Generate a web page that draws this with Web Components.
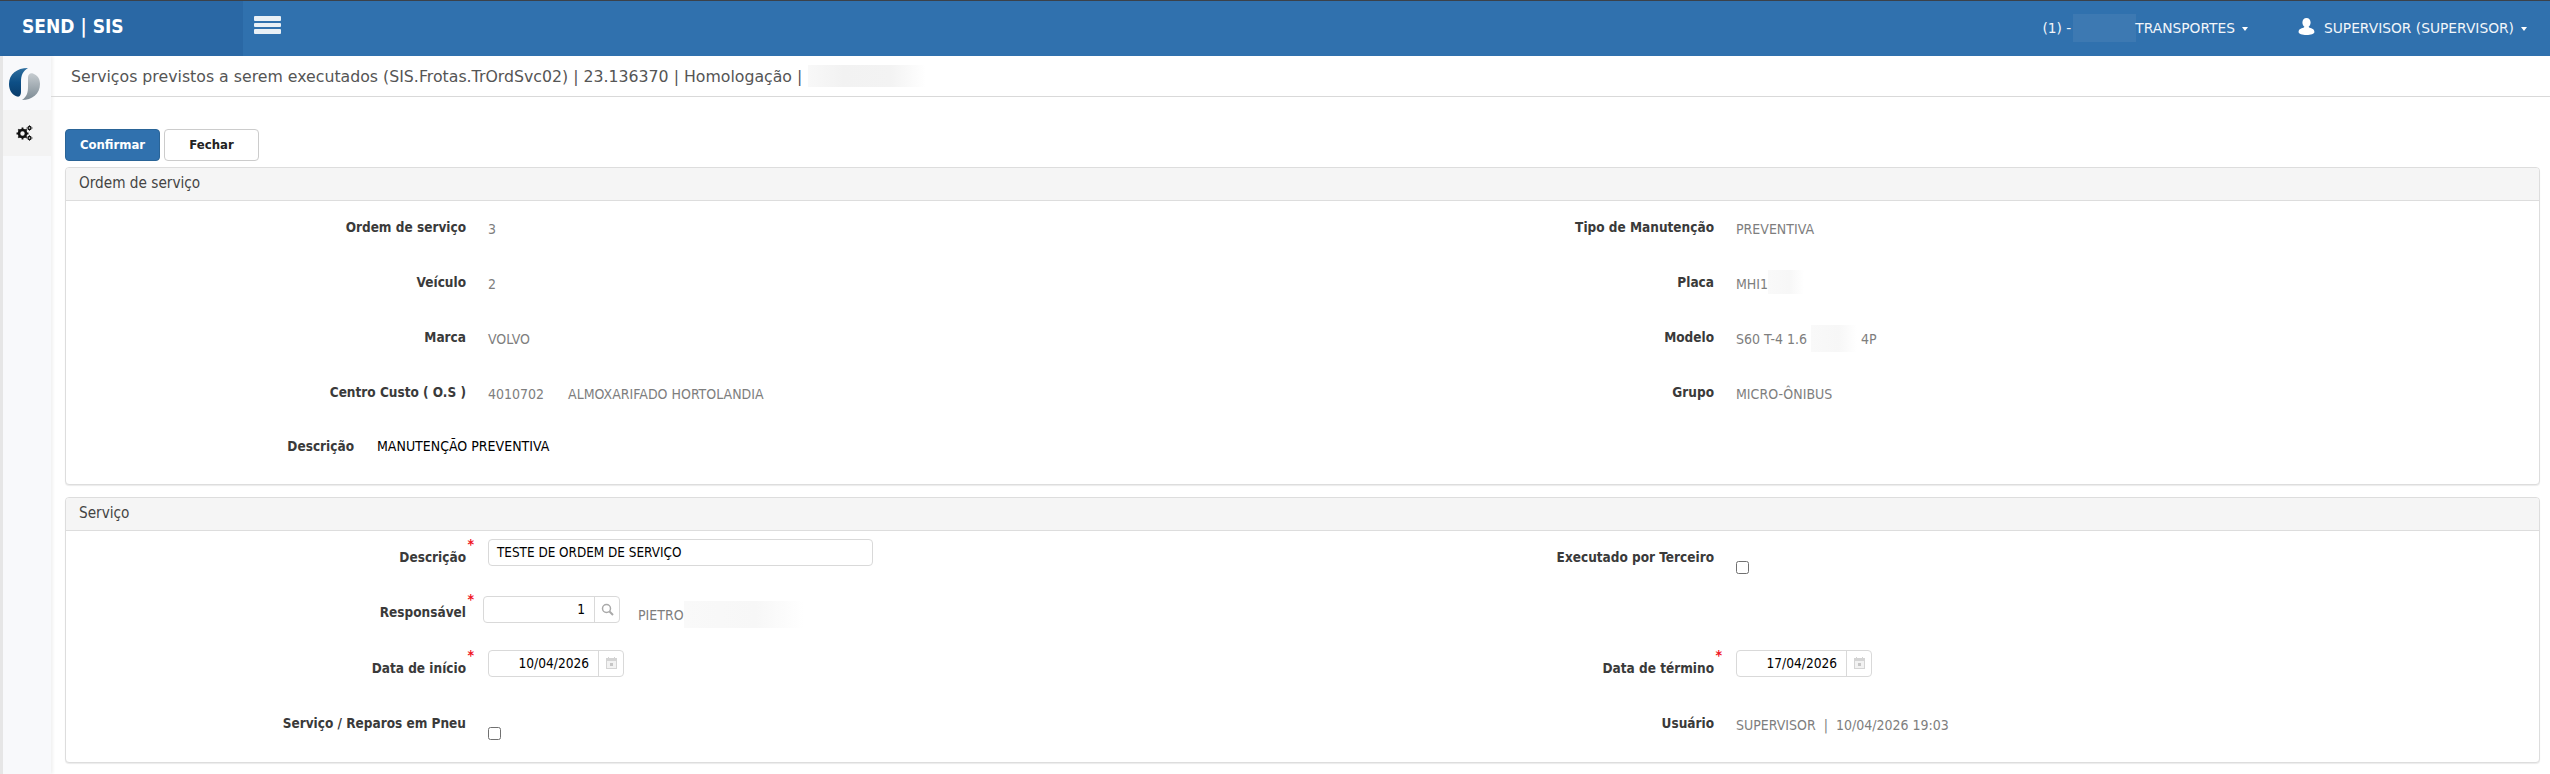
<!DOCTYPE html>
<html lang="pt-BR">
<head>
<meta charset="utf-8">
<title>Serviços previstos</title>
<style>
  html, body { margin: 0; background: #fff; }
  body { font-family: "DejaVu Sans Condensed", "DejaVu Sans", sans-serif; font-size: 13px; color: #333; }
</style>
</head>
<body>
<send-app>
  <send-topbar slot="top"></send-topbar>
  <send-sidebar slot="side"></send-sidebar>
  <send-titlebar>Serviços previstos a serem executados (SIS.Frotas.TrOrdSvc02) | 23.136370 | Homologação |</send-titlebar>
  <send-actions>
    <send-button primary>Confirmar</send-button>
    <send-button>Fechar</send-button>
  </send-actions>

  <send-panel heading="Ordem de serviço" style="--panel-height:318px;--body-pad:8px">
    <send-grid style="--row:55px">
      <send-field label="Ordem de serviço"><send-value>3</send-value></send-field>
      <send-field side="right" label="Tipo de Manutenção"><send-value>PREVENTIVA</send-value></send-field>
      <send-field label="Veículo"><send-value>2</send-value></send-field>
      <send-field side="right" label="Placa"><send-value>MHI1<send-redact style="--w:36px;--h:24px"></send-redact></send-value></send-field>
      <send-field label="Marca"><send-value>VOLVO</send-value></send-field>
      <send-field side="right" label="Modelo"><send-value>S60 T-4 1.6 <send-redact style="--w:46px;--h:27px"></send-redact> 4P</send-value></send-field>
      <send-field label="Centro Custo ( O.S )"><send-value>4010702 <span style="margin-left:20px">ALMOXARIFADO HORTOLANDIA</span></send-value></send-field>
      <send-field side="right" label="Grupo"><send-value>MICRO-ÔNIBUS</send-value></send-field>
    </send-grid>
    <send-field label="Descrição" style="--label-w:288px;--lift:-1px;--gap:23px"><send-value dark style="--lift:-3px">MANUTENÇÃO PREVENTIVA</send-value></send-field>
  </send-panel>

  <send-panel heading="Serviço" style="--panel-height:266px;--body-pad:8px;margin-top:12px">
    <send-grid style="--row:55.4px">
      <send-field label="Descrição" required><send-input style="--w:385px">TESTE DE ORDEM DE SERVIÇO</send-input></send-field>
      <send-field side="right" label="Executado por Terceiro"><send-check></send-check></send-field>
      <send-field label="Responsável" required style="--gap:17px">
        <send-addon icon="search" style="--w:137px;margin-top:2px">1</send-addon>
        <send-value style="margin-left:18px;--lift:1px">PIETRO<send-redact style="--w:120px;--h:27px"></send-redact></send-value>
      </send-field>
      <div></div>
      <send-field label="Data de início" required><send-addon icon="calendar" style="--w:136px">10/04/2026</send-addon></send-field>
      <send-field side="right" label="Data de término" required><send-addon icon="calendar" style="--w:136px">17/04/2026</send-addon></send-field>
      <send-field label="Serviço / Reparos em Pneu"><send-check></send-check></send-field>
      <send-field side="right" label="Usuário"><send-value>SUPERVISOR &nbsp;|&nbsp; 10/04/2026 19:03</send-value></send-field>
    </send-grid>
  </send-panel>
</send-app>

<script>
// base class, every element just stamps its html into an open shadow root
class SendElement extends HTMLElement {
  constructor() {
    super();
    this.attachShadow({ mode: "open" });
  }
  connectedCallback() {
    this.render();
  }
  render() {
    this.shadowRoot.innerHTML = this.html;
  }
}

class SendApp extends SendElement {
  get html() {
    return `
<style>
:host { display: block; min-height: 774px; }
.main { display: flex; min-height: 718px; }
.content { flex: 1 1 auto; min-width: 0; }
</style>
<slot name="top"></slot>
<div class="main">
  <slot name="side"></slot>
  <div class="content"><slot></slot></div>
</div>`;
  }
}

class SendTopbar extends SendElement {
  get html() {
    return `
<style>
:host { display: flex; height: 55px; background: #3071ae; color: #fff; border-top: 1px solid #3b4149; }
.brand { width: 243px; background: #2a68a5; box-sizing: border-box; padding: 0 0 0 22px; font-size: 19px; font-weight: bold; line-height: 50px; white-space: pre; }
.burger { display: flex; flex-direction: column; gap: 2px; margin: 15px 0 0 11px; width: 27px; }
.burger i { display: block; height: 4.500px; background: #e9f0f6; border-radius: 1px; }
.right { margin-left: auto; display: flex; align-items: center; font-family: "DejaVu Sans", sans-serif; font-size: 13.800px; color: #f2f6fa; padding: 0 23px 0 0; height: 56px; margin-top: -1px; }
.blur { width: 63px; height: 28px; margin: 0 -1px 0 2px; background: #3d79b2; }
.caret { width: 0; height: 0; border: 3.500px solid transparent; border-top: 4px solid #fff; border-bottom: 0; margin-left: 7px; margin-top: 1px; }
svg { margin: -4px 9px 0 50px; }
span { white-space: pre; }
</style>
<div class="brand">SEND | SIS</div>
<div class="burger"><i></i><i></i><i></i></div>
<div class="right">
  <span>(1) -</span><div class="blur"></div><span>TRANSPORTES</span><div class="caret"></div>
  <svg width="17" height="17" viewBox="0 0 17 17"><path fill="#fff" d="M8.500 0C6 0 4.400 2 4.400 4.600c0 1.800.8 3.300 2 4.200-.1.5-.4.8-1 1C3 10.600.6 11.200.6 14c0 1.800 3.600 3 7.900 3s7.900-1.200 7.900-3c0-2.800-2.400-3.400-4.800-4.200-.6-.2-.9-.5-1-1 1.200-.9 2-2.400 2-4.200C12.600 2 11 0 8.500 0z"/></svg>
  <span>SUPERVISOR (SUPERVISOR)</span><div class="caret"></div>
</div>`;
  }
}

class SendSidebar extends SendElement {
  get html() {
    return `
<style>
:host { display: block; flex: 0 0 48px; border-left: 3px solid #e6e6e6; background: #f8f9fb; box-shadow: 2px 0 3px rgba(0,0,0,.06); }
.logo { height: 54px; display: flex; justify-content: center; align-items: center; }
.gear { height: 46px; background: #f3f3f3; display: flex; justify-content: center; align-items: flex-start; }
.gear svg { margin-top: 15px; }
</style>
<div class="logo">
  <svg width="31" height="32" viewBox="0 0 31 32" style="margin-left:-5px;margin-top:1px">
    <defs>
      <linearGradient id="b" x1="0" y1="0" x2="0" y2="1"><stop offset="0" stop-color="#2f6f9f"/><stop offset=".5" stop-color="#0d4f86"/><stop offset="1" stop-color="#0a3d6b"/></linearGradient>
      <linearGradient id="g" x1="0" y1="0" x2="0" y2="1"><stop offset="0" stop-color="#c6ccd0"/><stop offset="1" stop-color="#7d8b94"/></linearGradient>
    </defs>
    <path fill="url(#b)" d="M19 0C8 0 0 6 0 16c0 6 3 11 8 12.500 3 .8 4-2 4-5V14C12 7 14 3 19 0z"/>
    <path fill="url(#g)" d="M13 32c10 0 18-6 18-16 0-6-3-9-7-10.500-3-.8-5 1-5 4v9c0 6-1 10-6 13.500z"/>
  </svg>
</div>
<div class="gear">
  <svg width="17" height="16" viewBox="0 0 17 16" style="margin-left:-5px">
    <g fill="none" stroke="#111">
      <circle cx="6.500" cy="8.500" r="3.500" stroke-width="2.600"/>
      <path stroke-width="1.800" d="M6.500 2.500v2M6.500 12.500v2M.5 8.500h2M10.500 8.500h2M2.300 4.300l1.400 1.400M9.300 11.300l1.400 1.400M2.300 12.700l1.400-1.400M9.300 5.700l1.400-1.400"/>
      <circle cx="13.500" cy="3" r="1.500" stroke-width="1.400"/>
      <circle cx="13.500" cy="13" r="1.500" stroke-width="1.400"/>
      <path stroke-width="1" d="M13.500 0v.6M13.500 5.400V6M10.500 3h.6M15.900 3h.6M13.500 10v.6M13.500 15.400v.6M10.500 13h.6M15.900 13h.6"/>
    </g>
  </svg>
</div>`;
  }
}

class SendTitlebar extends SendElement {
  get html() {
    return `
<style>
:host { display: flex; align-items: center; height: 40px; border-bottom: 1px solid #d9d9d9; padding-left: 20px; font-family: "DejaVu Sans", sans-serif; font-size: 15.750px; color: #555; white-space: nowrap; }
.blur { width: 118px; height: 22px; margin-left: 6px; background: linear-gradient(90deg,#f8f8f8,#f2f2f2 30%,#f3f3f3 70%,#fff); }
</style>
<slot></slot><div class="blur"></div>`;
  }
}

class SendActions extends SendElement {
  get html() {
    return `
<style>
:host { display: flex; gap: 4px; padding: 32px 0 6px 14px; }
</style>
<slot></slot>`;
  }
}

class SendButton extends SendElement {
  get html() {
    const primary = this.hasAttribute("primary");
    return `
<style>
:host { display: block; }
button { display: block; width: 95px; height: 32px; padding: 0 0 2px; border-radius: 4px; font: bold 13px "DejaVu Sans Condensed", "DejaVu Sans", sans-serif;
  border: 1px solid ${primary ? "#2a6497" : "#ccc"}; background: ${primary ? "#3071ae" : "#fff"}; color: ${primary ? "#fff" : "#222"}; }
</style>
<button type="button"><slot></slot></button>`;
  }
}

class SendPanel extends SendElement {
  get html() {
    return `
<style>
:host { display: block; box-sizing: border-box; height: var(--panel-height); margin: 0 10px 0 14px; border: 1px solid #ddd; border-radius: 4px; box-shadow: 0 1px 1px rgba(0,0,0,.08); background: #fff; }
.head { height: 32px; line-height: 30px; padding-left: 13px; background: #f5f5f5; border-bottom: 1px solid #ddd; border-radius: 3px 3px 0 0; font-size: 15.200px; color: #444; }
.body { padding-top: var(--body-pad, 8px); }
</style>
<div class="head">${this.getAttribute("heading") || ""}</div>
<div class="body"><slot></slot></div>`;
  }
}

class SendGrid extends SendElement {
  get html() {
    return `
<style>
:host { display: grid; grid-template-columns: 1237px 1fr; grid-auto-rows: var(--row, 55px); }
</style>
<slot></slot>`;
  }
}

class SendField extends SendElement {
  get html() {
    const right = this.getAttribute("side") === "right";
    const star = this.hasAttribute("required") ? '<b class="star">*</b>' : "";
    return `
<style>
:host { display: flex; align-items: flex-start; }
.label { position: relative; flex: 0 0 auto; box-sizing: border-box; width: var(--label-w, ${right ? 411 : 400}px); padding-top: var(--label-top, 8px); margin-top: var(--lift, 0); text-align: right; font-weight: bold; font-size: 13.500px; line-height: 20px; color: #3a3a3a; white-space: nowrap; }
.star { position: absolute; right: -8px; top: -2px; color: #f01324; font-size: 14px; line-height: 14px; }
.value { display: flex; align-items: flex-start; margin-left: var(--gap, 22px); min-width: 0; }
</style>
<div class="label">${this.getAttribute("label") || ""}${star}</div>
<div class="value"><slot></slot></div>`;
  }
}

class SendValue extends SendElement {
  get html() {
    return `
<style>
:host { display: flex; align-items: flex-start; padding-top: calc(10px + var(--lift, 0px)); font-size: 14px; line-height: 20px; white-space: pre; color: ${this.hasAttribute("dark") ? "#000" : "#7e7e7e"}; }
</style>
<slot></slot>`;
  }
}

class SendRedact extends SendElement {
  get html() {
    return `
<style>
:host { display: inline-block; width: var(--w); height: var(--h); margin-top: -4px; background: linear-gradient(90deg,#f9f9f9,#f7f7f7 60%,#fff); }
</style>`;
  }
}

class SendInput extends SendElement {
  get html() {
    return `
<style>
:host { display: block; box-sizing: border-box; width: var(--w); height: 27px; border: 1px solid #d9d9d9; border-radius: 4px; padding: 0 0 0 8px; font-size: 13.400px; line-height: 25px; color: #000; background: #fff; white-space: nowrap; }
</style>
<slot></slot>`;
  }
}

class SendAddon extends SendElement {
  get icon() {
    if (this.getAttribute("icon") === "search") {
      return `<svg width="13" height="13" viewBox="0 0 13 13" fill="none" stroke="#a9a9a9"><circle cx="5.500" cy="5.500" r="4" stroke-width="1.500"/><path stroke-width="2" d="M8.500 8.500l3.500 3.500"/></svg>`;
    }
    return `<svg width="11" height="12" viewBox="0 0 11 12"><path fill="#d4d4d4" d="M0 1h2V0h1v1h5V0h1v1h2v11H0z"/><path fill="#f2f2f2" d="M1 4h9v7H1z"/><path fill="#c6c6c6" d="M4 6h3v3H4z"/></svg>`;
  }
  get html() {
    return `
<style>
:host { display: flex; box-sizing: border-box; width: var(--w); height: 27px; border: 1px solid #d9d9d9; border-radius: 4px; font-size: 13.600px; line-height: 25px; color: #000; background: #fff; }
.text { flex: 1 1 auto; text-align: right; padding-right: 9px; }
.btn { flex: 0 0 24px; display: flex; align-items: center; justify-content: center; border-left: 1px solid #d9d9d9; }
</style>
<div class="text"><slot></slot></div>
<div class="btn">${this.icon}</div>`;
  }
}

class SendCheck extends SendElement {
  get html() {
    return `
<style>
:host { display: block; box-sizing: border-box; width: 13px; height: 13px; margin-top: 22px; border: 1px solid #707070; border-radius: 2.500px; background: #fff; }
</style>`;
  }
}

customElements.define("send-app", SendApp);
customElements.define("send-topbar", SendTopbar);
customElements.define("send-sidebar", SendSidebar);
customElements.define("send-titlebar", SendTitlebar);
customElements.define("send-actions", SendActions);
customElements.define("send-button", SendButton);
customElements.define("send-panel", SendPanel);
customElements.define("send-grid", SendGrid);
customElements.define("send-field", SendField);
customElements.define("send-value", SendValue);
customElements.define("send-redact", SendRedact);
customElements.define("send-input", SendInput);
customElements.define("send-addon", SendAddon);
customElements.define("send-check", SendCheck);
</script>
</body>
</html>
